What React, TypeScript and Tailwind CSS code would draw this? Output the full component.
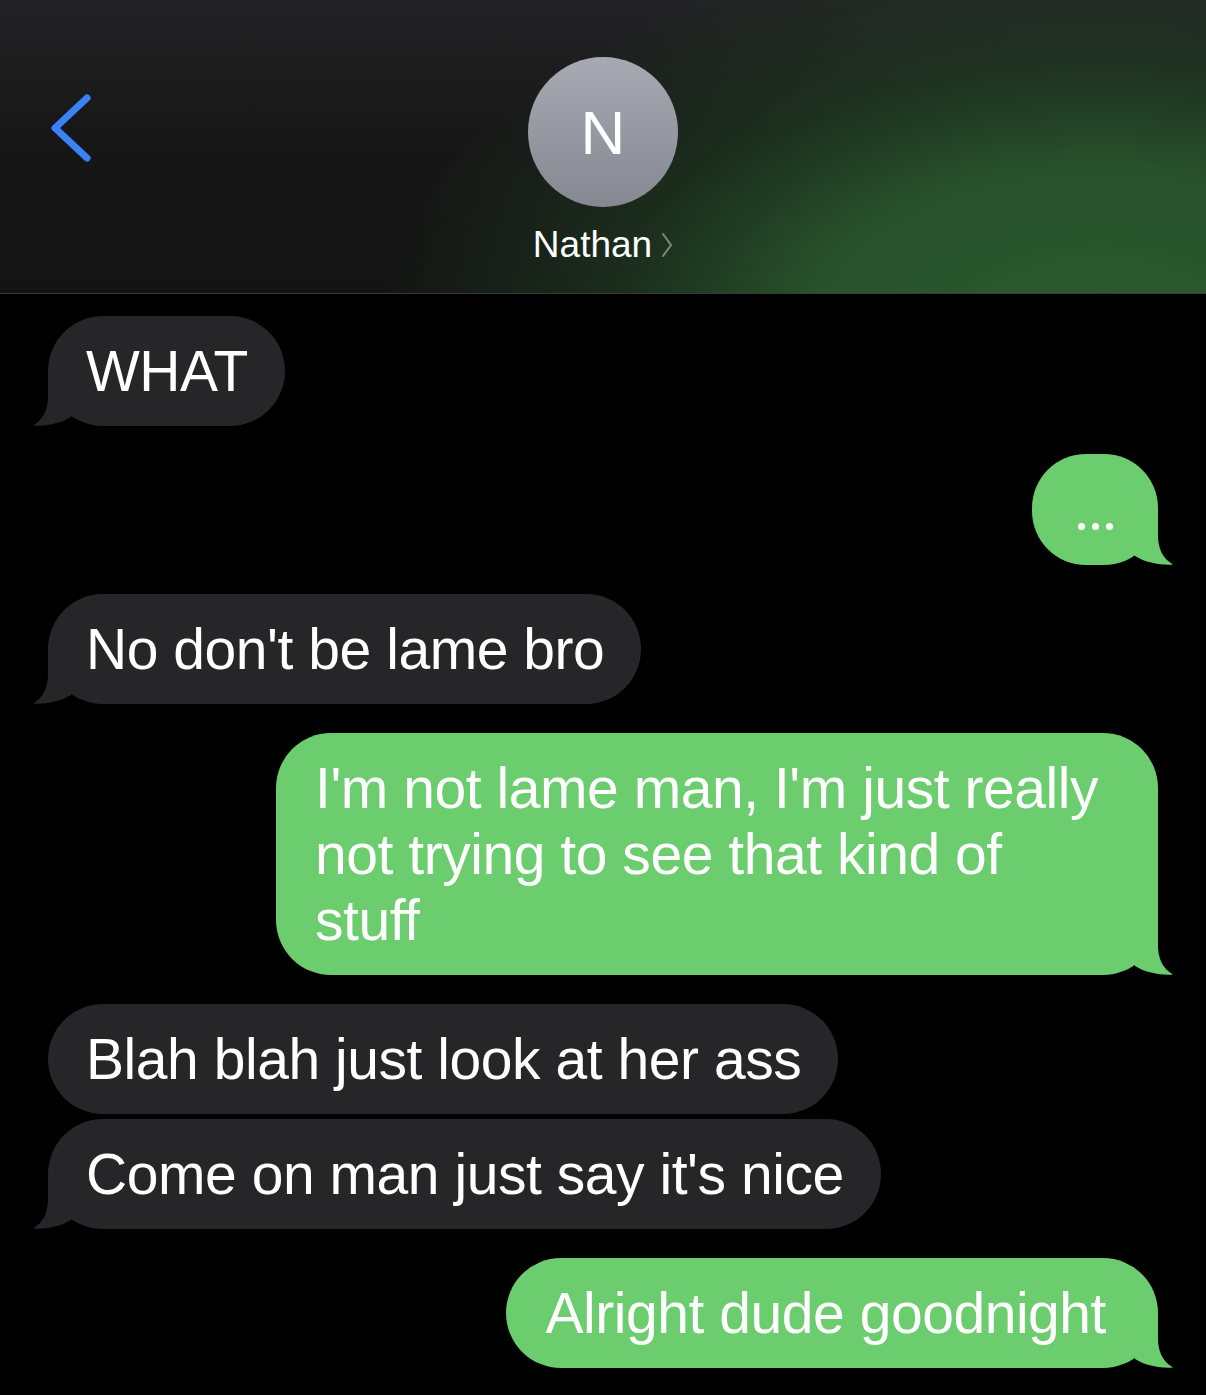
import React from "react";

type Msg = { id: number; from: "them" | "me"; text?: string; typing?: boolean; tail: boolean; gap: string };

const messages: Msg[] = [
  { id: 0, from: "them", text: "WHAT", tail: true, gap: "mt-0" },
  { id: 1, from: "me", typing: true, tail: true, gap: "mt-[28px]" },
  { id: 2, from: "them", text: "No don't be lame bro", tail: true, gap: "mt-[29px]" },
  {
    id: 3,
    from: "me",
    text: "I'm not lame man, I'm just really not trying to see that kind of stuff",
    tail: true,
    gap: "mt-[29px]",
  },
  { id: 4, from: "them", text: "Blah blah just look at her ass", tail: false, gap: "mt-[29px]" },
  { id: 5, from: "them", text: "Come on man just say it's nice", tail: true, gap: "mt-[5px]" },
  { id: 6, from: "me", text: "Alright dude goodnight", tail: true, gap: "mt-[29px]" },
];

// little curled tail at the bottom corner of a bubble
function Tail({ side, color }: { side: "left" | "right"; color: string }) {
  return (
    <svg
      viewBox="0 0 48 55"
      className={
        side === "left"
          ? "absolute bottom-0 left-[-16px] h-[55px] w-[48px]"
          : "absolute bottom-0 right-[-16px] h-[55px] w-[48px] -scale-x-100"
      }
    >
      <path d="M16 0 L16 22 C16.5 38 12 48 1 54.5 C12 55.5 28 53 39 46 L46 0 Z" fill={color} />
    </svg>
  );
}

function Bubble({ msg }: { msg: Msg }) {
  const mine = msg.from === "me";
  const color = mine ? "#6bcd6e" : "#262628";
  return (
    <div className={`flex ${mine ? "justify-end" : "justify-start"} ${msg.gap}`}>
      {msg.typing ? (
        <div className="relative flex h-[111px] w-[126px] items-end justify-center gap-[7px] rounded-[54px] bg-[#6bcd6e] pb-[35px]">
          <span className="h-[7px] w-[7px] rounded-full bg-white" />
          <span className="h-[7px] w-[7px] rounded-full bg-white" />
          <span className="h-[7px] w-[7px] rounded-full bg-white" />
          <Tail side="right" color={color} />
        </div>
      ) : (
        <div
          className={`relative max-w-[882px] rounded-[55px] py-[22px] text-[57px] leading-[66px] tracking-[-0.45px] text-white ${
            mine ? "bg-[#6bcd6e] pl-[39px] pr-[52px]" : "bg-[#262628] pl-[38px] pr-[37px]"
          }`}
        >
          {msg.text}
          {msg.tail && <Tail side={mine ? "right" : "left"} color={color} />}
        </div>
      )}
    </div>
  );
}

export default function App() {
  return (
    <div className="min-h-screen bg-black font-['Liberation_Sans',Arial,sans-serif]">
      <header className="flex h-[294px] items-start border-b border-[#3a3a3c] bg-[radial-gradient(ellipse_720px_400px_at_1100px_330px,#2b5a2f_0%,#28522c_40%,rgba(32,64,35,0.55)_68%,transparent_100%),linear-gradient(to_bottom,#232325_0%,#171717_45%,#141414_100%)]">
        <div className="flex w-[130px] pl-[48px] pt-[94px]">
          <svg viewBox="0 0 44 68" className="h-[68px] w-[44px]">
            <path
              d="M39 4 L7 34 L39 64"
              fill="none"
              stroke="#3a82f7"
              strokeWidth="7"
              strokeLinecap="round"
              strokeLinejoin="round"
            />
          </svg>
        </div>
        <div className="flex flex-1 flex-col items-center pr-[130px] pt-[57px]">
          <div className="flex h-[150px] w-[150px] items-center justify-center rounded-full bg-[linear-gradient(to_bottom,#a7aab3,#858891)] text-[62px] text-white">
            N
          </div>
          <div className="mt-[16px] flex items-center gap-[9px] text-[37px] leading-[44px] text-white">
            <span>Nathan</span>
            <svg viewBox="0 0 12 26" className="h-[26px] w-[12px]">
              <path d="M2 2 L10 13 L2 24" fill="none" stroke="#7d8a7e" strokeWidth="2" strokeLinecap="round" />
            </svg>
          </div>
        </div>
      </header>
      <main className="flex flex-col px-[48px] pb-[27px] pt-[22px]">
        {messages.map((m) => (
          <Bubble key={m.id} msg={m} />
        ))}
      </main>
    </div>
  );
}
